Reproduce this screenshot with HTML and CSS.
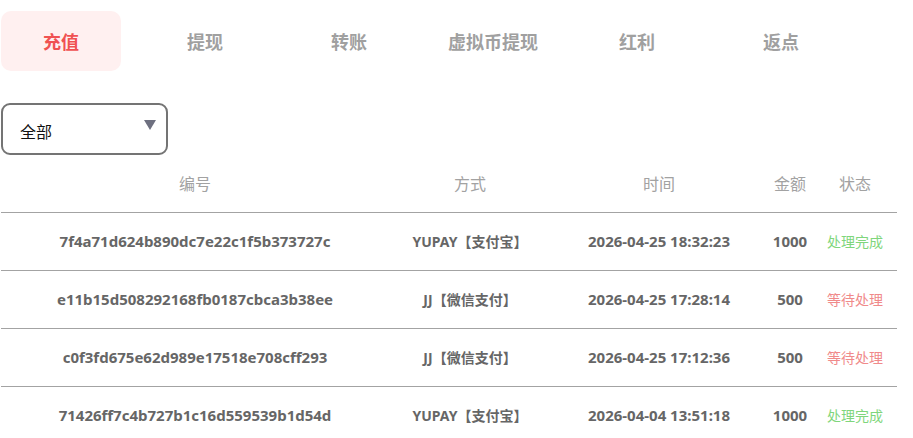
FILE: index.html
```html
<!DOCTYPE html>
<html lang="zh">
<head>
<meta charset="utf-8">
<link rel="stylesheet" href="styles.css">
</head>
<body>
<div class="page">
  <nav class="tabs">
    <div class="tab active">充值</div>
    <div class="tab">提现</div>
    <div class="tab">转账</div>
    <div class="tab">虚拟币提现</div>
    <div class="tab">红利</div>
    <div class="tab">返点</div>
  </nav>
  <div class="filter">
    <div class="select">
      <span class="select-label">全部</span>
      <svg class="select-arrow" width="12" height="10" viewBox="0 0 12 10"><path d="M0 0 H12 L6 10 Z" fill="#6e7080"/></svg>
    </div>
  </div>
  <table class="records">
    <colgroup>
      <col class="c1"><col class="c2"><col class="c3"><col class="c4"><col class="c5">
    </colgroup>
    <thead>
      <tr><th>编号</th><th>方式</th><th>时间</th><th>金额</th><th>状态</th></tr>
    </thead>
    <tbody>
      <tr><td class="num">7f4a71d624b890dc7e22c1f5b373727c</td><td>YUPAY【支付宝】</td><td class="num">2026-04-25 18:32:23</td><td class="num">1000</td><td class="status done">处理完成</td></tr>
      <tr><td class="num">e11b15d508292168fb0187cbca3b38ee</td><td>JJ【微信支付】</td><td class="num">2026-04-25 17:28:14</td><td class="num">500</td><td class="status wait">等待处理</td></tr>
      <tr><td class="num">c0f3fd675e62d989e17518e708cff293</td><td>JJ【微信支付】</td><td class="num">2026-04-25 17:12:36</td><td class="num">500</td><td class="status wait">等待处理</td></tr>
      <tr><td class="num">71426ff7c4b727b1c16d559539b1d54d</td><td>YUPAY【支付宝】</td><td class="num">2026-04-04 13:51:18</td><td class="num">1000</td><td class="status done">处理完成</td></tr>
    </tbody>
  </table>
</div>
</body>
</html>
```
FILE: styles.css
```css
* { box-sizing: border-box; }
html, body { margin: 0; padding: 0; background: #fff; }
body {
  font-family: "Noto Sans", "Noto Sans CJK SC", sans-serif;
  color: #666;
}
.page { padding: 11px 16px 0 1px; }
.tabs {
  display: flex;
  gap: 24px;
}
.tab {
  width: 120px;
  height: 60px;
  display: flex;
  align-items: center;
  justify-content: center;
  font-size: 18px;
  font-weight: 700;
  color: #a0a0a0;
  border-radius: 10px;
}
.tab.active {
  background: #fff0f0;
  color: #f05252;
}
.filter { padding-top: 32px; }
.select {
  width: 167px;
  height: 52px;
  border: 2px solid #747474;
  border-radius: 9px;
  display: flex;
  align-items: center;
  justify-content: space-between;
  padding: 0 10px 0 17px;
}
.select-label {
  font-size: 16px;
  color: #111;
  font-family: "Noto Sans CJK SC", sans-serif;
  margin-top: 3px;
}
.select-arrow { margin-top: -8px; }
.records {
  width: 896px;
  border-collapse: collapse;
  table-layout: fixed;
}
.c1 { width: 388px; }
.c2 { width: 162px; }
.c3 { width: 216px; }
.c4 { width: 46px; }
.c5 { width: 84px; }
.records th {
  height: 57px;
  font-size: 16px;
  font-weight: 400;
  color: #a2a2a2;
  text-align: center;
  padding: 0;
  font-family: "Noto Sans CJK SC", sans-serif;
}
.records td {
  height: 58px;
  border-top: 1px solid #a3a3a3;
  text-align: center;
  font-size: 14px;
  font-weight: 700;
  color: #666;
  padding: 0;
  white-space: nowrap;
}
.records td.num { font-size: 15px; }
.records td.status {
  font-weight: 400;
  font-size: 14px;
  font-family: "Noto Sans CJK SC", sans-serif;
}
.status.done { color: #7fd67c; }
.status.wait { color: #f08a8a; }
```
